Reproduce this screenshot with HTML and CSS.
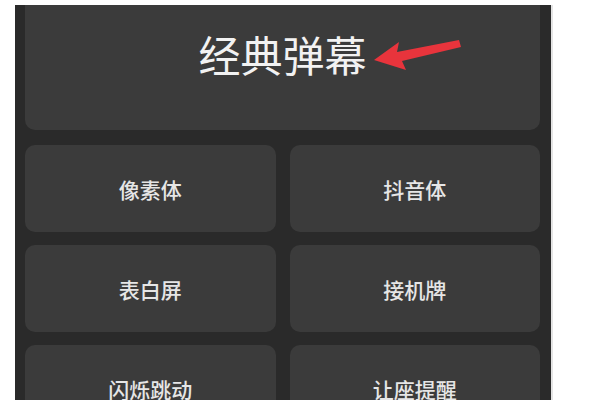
FILE: index.html
```html
<!DOCTYPE html>
<html lang="zh">
<head>
<meta charset="utf-8">
<link rel="stylesheet" href="styles.css">
</head>
<body>
<div class="panel">
  <div class="hero">
    <span class="hero-title">经典弹幕</span>
    <svg class="arrow" width="100" height="40" viewBox="0 0 100 40">
      <polygon points="5,22 30,4 28,14 90,2 92,9 33,23 37,32" fill="#e8343c"/>
    </svg>
  </div>
  <div class="grid">
    <div class="btn">像素体</div>
    <div class="btn">抖音体</div>
    <div class="btn">表白屏</div>
    <div class="btn">接机牌</div>
    <div class="btn">闪烁跳动</div>
    <div class="btn">让座提醒</div>
  </div>
</div>
</body>
</html>
```
FILE: styles.css
```css
html, body {
  margin: 0;
  padding: 0;
  background: #ffffff;
}
body {
  font-family: "Noto Sans CJK SC", "Noto Sans", sans-serif;
  height: 400px;
  overflow: hidden;
}
.panel {
  margin: 5px 0 0 15px;
  width: 515px;
  height: 395px;
  padding: 0 11px 0 10px;
  box-sizing: content-box;
  background: #2a2a2a;
  border-right: 2px solid #e4e4e4;
  overflow: hidden;
}
.hero {
  position: relative;
  height: 135px;
  margin-top: -10px;
  margin-bottom: 15px;
  border-radius: 10px;
  background: #3b3b3b;
  display: flex;
  justify-content: center;
  align-items: flex-start;
  box-sizing: border-box;
  padding-top: 36px;
}
.hero-title {
  color: #f2f2f2;
  font-size: 42px;
  line-height: 46px;
  font-weight: 400;
}
.arrow {
  position: absolute;
  left: 344px;
  top: 43px;
}
.grid {
  display: grid;
  grid-template-columns: 1fr 1fr;
  grid-auto-rows: 87px;
  column-gap: 14px;
  row-gap: 13px;
}
.btn {
  background: #3b3b3b;
  border-radius: 10px;
  display: flex;
  align-items: center;
  justify-content: center;
  color: #e6e6e6;
  font-size: 21px;
  font-weight: 500;
}
```
